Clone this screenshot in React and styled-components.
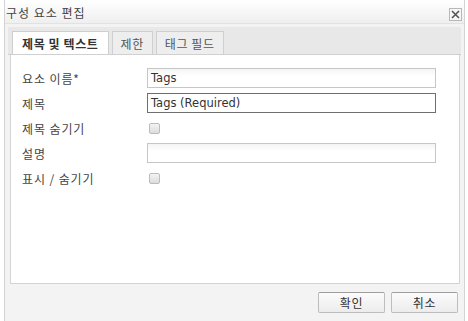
import React from 'react';
import styled, { createGlobalStyle } from 'styled-components';

const Global = createGlobalStyle`
  html, body {
    margin: 0;
    padding: 0;
    background: #ffffff;
  }
  body {
    font-family: "Liberation Sans", "Noto Sans CJK KR", sans-serif;
    font-size: 12px;
    color: #333;
  }
`;

const Dialog = styled.div`
  width: 468px;
  height: 321px;
  box-sizing: border-box;
  padding-left: 4px;
  padding-right: 3px;
  display: flex;
  background: #fff;
`;

const Frame = styled.div`
  flex: 1;
  display: flex;
  flex-direction: column;
  border-left: 1px solid #d4d4d4;
  border-right: 1px solid #d4d4d4;
  background: #f3f3f3;
`;

const TitleBar = styled.div`
  height: 23px;
  display: flex;
  align-items: center;
  justify-content: space-between;
  padding: 0 2px 0 1px;
  background: linear-gradient(#ffffff, #efefef);
  border-bottom: 1px solid #e2e2e2;
`;

const Title = styled.span`
  font-family: "Noto Sans CJK KR", sans-serif;
  font-size: 12px;
  letter-spacing: 1px;
  color: #444;
  margin-top: 2px;
`;

const CloseButton = styled.div`
  width: 11px;
  height: 11px;
  border: 1px solid #b8b8b8;
  background: #f6f6f6;
  display: flex;
  align-items: center;
  justify-content: center;
  margin-top: 6px;
`;

const Content = styled.div`
  flex: 1;
  display: flex;
  flex-direction: column;
  padding: 3px 3px 0 3px;
`;

const TabStrip = styled.div`
  display: flex;
  gap: 3px;
  padding: 4px 0 0 4px;
  background: #e8e8e8;
  border-bottom: 1px solid #d0d0d0;
`;

const Tab = styled.div`
  height: 22px;
  padding: 0 ${p => p.$pad}px;
  display: flex;
  align-items: center;
  font-family: "Noto Sans CJK KR", sans-serif;
  font-size: 12px;
  letter-spacing: 0.6px;
  color: ${p => (p.$active ? '#333' : '#555')};
  font-weight: ${p => (p.$active ? 600 : 400)};
  background: ${p => (p.$active ? '#ffffff' : '#eeeeee')};
  border: 1px solid #cfcfcf;
  border-bottom: none;
  margin-bottom: ${p => (p.$active ? '-1px' : '0')};
`;

const Panel = styled.div`
  flex: 1;
  background: #fff;
  border: 1px solid #d4d4d4;
  border-top: none;
  margin: 0 1px 0 2px;
  padding: 13px 0 0 11px;
  display: flex;
  flex-direction: column;
  gap: 5px;
`;

const Row = styled.div`
  display: flex;
  align-items: center;
  height: 20px;
`;

const Label = styled.label`
  width: 125px;
  font-family: "Noto Sans CJK KR", sans-serif;
  font-size: 12px;
  letter-spacing: 0.9px;
  color: #444;
`;

const Input = styled.div`
  width: 284px;
  height: 18px;
  box-sizing: content-box;
  border: 1px solid ${p => (p.$focus ? '#6f6f6f' : '#c6c6c6')};
  background: ${p => (p.$focus ? '#fff' : 'linear-gradient(#f4f4f4, #ffffff 40%)')};
  display: flex;
  align-items: center;
  padding-left: 3px;
  font-family: "DejaVu Sans", "Noto Sans CJK KR", sans-serif;
  font-size: 11.5px;
  color: #333;
`;

const Checkbox = styled.span`
  width: 9px;
  height: 9px;
  margin-left: 2px;
  border: 1px solid #bcbcbc;
  border-radius: 2px;
  background: linear-gradient(#f3f3f3, #dcdcdc);
`;

const Footer = styled.div`
  height: 37px;
  display: flex;
  justify-content: flex-end;
  align-items: center;
  gap: 6px;
  padding: 0 6px 0 0;
`;

const Button = styled.div`
  width: 65px;
  height: 19px;
  border: 1px solid #bdbdbd;
  border-top-color: #9e9e9e;
  border-radius: 2px;
  background: linear-gradient(#fbfbfb, #ececec);
  display: flex;
  align-items: center;
  justify-content: center;
  font-family: "Noto Sans CJK KR", sans-serif;
  font-size: 12px;
  letter-spacing: 0.8px;
  color: #333;
`;

const rows = [
  { label: '요소 이름*', type: 'input', value: 'Tags' },
  { label: '제목', type: 'input', value: 'Tags (Required)', focus: true },
  { label: '제목 숨기기', type: 'check' },
  { label: '설명', type: 'input', value: '' },
  { label: '표시 / 숨기기', type: 'check' },
];

export default function App() {
  return (
    <>
      <Global />
      <Dialog>
        <Frame>
          <TitleBar>
            <Title>구성 요소 편집</Title>
            <CloseButton>
              <svg width="9" height="9" viewBox="0 0 9 9">
                <path d="M1 1 L8 8 M8 1 L1 8" stroke="#555" strokeWidth="1.6" />
              </svg>
            </CloseButton>
          </TitleBar>
          <Content>
            <TabStrip>
              <Tab $active $pad={9}>제목 및 텍스트</Tab>
              <Tab $pad={8}>제한</Tab>
              <Tab $pad={8}>태그 필드</Tab>
            </TabStrip>
            <Panel>
              {rows.map(r => (
                <Row key={r.label}>
                  <Label>{r.label}</Label>
                  {r.type === 'input' ? (
                    <Input $focus={r.focus}>{r.value}</Input>
                  ) : (
                    <Checkbox />
                  )}
                </Row>
              ))}
            </Panel>
          </Content>
          <Footer>
            <Button>확인</Button>
            <Button>취소</Button>
          </Footer>
        </Frame>
      </Dialog>
    </>
  );
}
